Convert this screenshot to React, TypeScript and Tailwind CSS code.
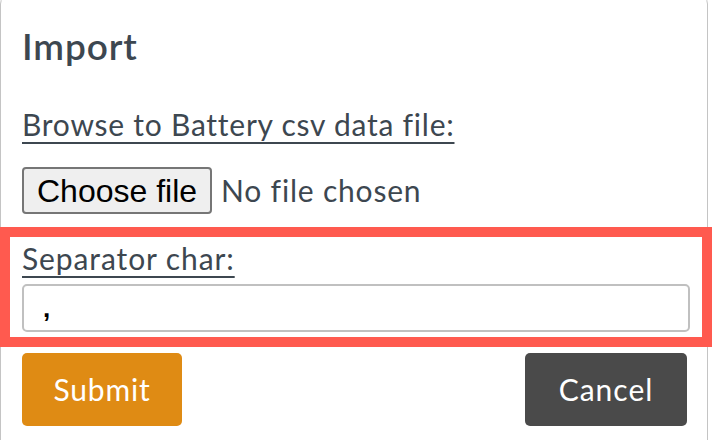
import React from "react";

export default function App() {
  return (
    <div
      className="w-[712px] h-[440px] overflow-hidden bg-white"
      style={{ fontFamily: "Lato, 'Open Sans', sans-serif" }}
    >
      <div className="mt-[-6px] w-[708px] h-[460px] rounded-[10px] border border-[#c4c4c4] bg-white pt-[29px]">
        <h1 className="pl-[21px] text-[37px] leading-[44px] font-semibold tracking-[0.9px] text-[#3d4750]">
          Import
        </h1>
        <div className="mt-[38px] pl-[21px]">
          <label className="text-[30px] leading-[36px] tracking-[0.75px] text-[#3d4750] underline decoration-2 underline-offset-[6px]">
            Browse to Battery csv data file:
          </label>
        </div>
        <div className="mt-[25px] pl-[21px] flex items-center gap-[9px]">
          <button
            className="h-[47px] px-[13px] rounded-[4px] border-2 border-[#767676] bg-[#efefef] text-black text-[32px] leading-none"
            style={{ fontFamily: "'Liberation Sans', Arial, sans-serif" }}
          >
            Choose file
          </button>
          <span className="text-[30px] tracking-[0.8px] text-[#3d4750]">No file chosen</span>
        </div>
        <div className="mt-[13px] ml-[-1px] w-[712px] border-[10px] border-[#ff5a4f] pl-[12px] pr-[12px] pt-[3px] pb-[5px]">
          <label className="block text-[30px] leading-[36px] tracking-[0.9px] text-[#3d4750] underline decoration-2 underline-offset-[6px]">
            Separator char:
          </label>
          <input
            readOnly
            value=","
            className="mt-[8px] block w-full h-[48px] rounded-[5px] border-2 border-[#c0c0c0] px-[19px] text-[26px] font-bold text-black outline-none"
            style={{ fontFamily: "'Liberation Sans', Arial, sans-serif" }}
          />
        </div>
        <div className="mt-[6px] pl-[21px] pr-[20px] flex justify-between">
          <button className="w-[160px] h-[73px] rounded-[5px] bg-[#df8b14] text-white text-[30px] tracking-[0.8px]">
            Submit
          </button>
          <button className="w-[162px] h-[73px] rounded-[5px] bg-[#4a4a4a] text-white text-[30px] tracking-[1px]">
            Cancel
          </button>
        </div>
      </div>
    </div>
  );
}
